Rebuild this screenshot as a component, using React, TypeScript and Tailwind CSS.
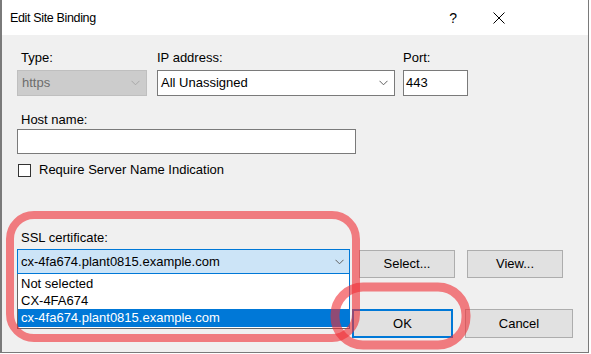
import React from 'react';

const Chevron: React.FC<{ color?: string }> = ({ color = '#606060' }) => (
  <svg width="9" height="6" viewBox="0 0 9 6" className="shrink-0">
    <polyline points="0.5,0.8 4.5,4.8 8.5,0.8" fill="none" stroke={color} strokeWidth="1" />
  </svg>
);

const Label: React.FC<{ children: React.ReactNode; indent?: boolean }> = ({ children, indent }) => (
  <div className={`h-[16px] leading-[16px] ${indent ? 'pl-[4px]' : ''}`}>{children}</div>
);

const Button: React.FC<{ children: React.ReactNode; className?: string; primary?: boolean }> = ({
  children,
  className = '',
  primary,
}) => (
  <div
    className={`flex items-center justify-center bg-[#e1e1e1] ${
      primary ? 'border-2 border-[#0078d7]' : 'border border-[#adadad]'
    } ${className}`}
  >
    {children}
  </div>
);

export default function App() {
  return (
    <div
      className="relative w-[591px] h-[354px] bg-white text-[13px] text-black overflow-hidden"
      style={{ fontFamily: '"Liberation Sans", Arial, sans-serif' }}
    >
      <div className="flex flex-col w-[589px] h-[353px] border-l-2 border-r border-b border-[#7a7a7a]">
        {/* title bar */}
        <div className="h-[35px] shrink-0 bg-white flex items-center pl-[8px] pr-[83px]">
          <span className="text-[12.5px] tracking-[-0.35px] pt-[1px]">Edit Site Binding</span>
          <span className="ml-auto text-[14px] leading-none pt-[1px]">?</span>
          <svg width="12" height="12" viewBox="0 0 12 12" className="ml-[36px]">
            <line x1="0.5" y1="0.5" x2="11.5" y2="11.5" stroke="#000" strokeWidth="1" />
            <line x1="11.5" y1="0.5" x2="0.5" y2="11.5" stroke="#000" strokeWidth="1" />
          </svg>
        </div>

        {/* body */}
        <div className="flex-1 bg-[#f0f0f0] pl-[15px] pt-[15px]">
          <div className="flex items-start">
            <div className="w-[130px]">
              <Label indent>Type:</Label>
              <div className="mt-[4px] h-[26px] bg-[#cccccc] border border-[#bfbfbf] flex items-center pl-[4px] pr-[6px] text-[#6d6d6d]">
                <span>https</span>
                <span className="ml-auto">
                  <Chevron color="#a8a8a8" />
                </span>
              </div>
            </div>
            <div className="w-[238px] ml-[10px]">
              <Label>IP address:</Label>
              <div className="mt-[4px] h-[26px] bg-white border border-[#7a7a7a] flex items-center pl-[3px] pr-[6px]">
                <span>All Unassigned</span>
                <span className="ml-auto">
                  <Chevron />
                </span>
              </div>
            </div>
            <div className="w-[65px] ml-[8px]">
              <Label>Port:</Label>
              <div className="mt-[4px] h-[26px] bg-white border border-[#7a7a7a] flex items-center pl-[2px]">
                443
              </div>
            </div>
          </div>

          <div className="mt-[16px]">
            <Label indent>Host name:</Label>
            <div className="mt-[1px] w-[339px] h-[25px] bg-white border border-[#7a7a7a]" />
          </div>

          <div className="mt-[8px] h-[16px] flex items-center">
            <div className="ml-[1px] w-[13px] h-[13px] bg-white border border-[#333333]" />
            <span className="ml-[8px] leading-[16px]">Require Server Name Indication</span>
          </div>

          <div className="mt-[52px]">
            <Label indent>SSL certificate:</Label>
            <div className="mt-[3px] flex items-start">
              <div className="relative w-[333px]">
                <div className="h-[25px] bg-[#cce4f7] border border-[#0078d7] flex items-center pl-[3px] pr-[5px]">
                  <span>cx-4fa674.plant0815.example.com</span>
                  <span className="ml-auto">
                    <Chevron />
                  </span>
                </div>
                {/* open dropdown list */}
                <div className="absolute left-0 top-[25px] w-[333px] bg-white border border-t-0 border-[#646464] border-r-[#0078d7] pt-[1px] pb-[1px] z-10">
                  <div className="h-[17px] leading-[17px] pl-[3px]">Not selected</div>
                  <div className="h-[17px] leading-[17px] pl-[3px]">CX-4FA674</div>
                  <div className="h-[18px] leading-[18px] pl-[3px] bg-[#0078d7] text-white">
                    cx-4fa674.plant0815.example.com
                  </div>
                </div>
              </div>
              <Button className="ml-[9px] mt-[1px] w-[96px] h-[28px]">Select...</Button>
              <Button className="ml-[12px] mt-[1px] w-[96px] h-[28px]">View...</Button>
            </div>
          </div>

          <div className="mt-[31px] flex ml-[335px]">
            <Button primary className="w-[101px] h-[29px]">
              OK
            </Button>
            <Button className="ml-[12px] w-[108px] h-[29px]">Cancel</Button>
          </div>
        </div>
      </div>

      {/* red highlight annotations */}
      <svg className="absolute inset-0 z-20 pointer-events-none" width="591" height="354" viewBox="0 0 591 354">
        <g fill="none" stroke="rgb(240,45,52)" strokeOpacity="0.6">
          <rect x="10" y="215" width="346" height="123" rx="24" strokeWidth="8" />
          <rect x="335" y="287" width="131" height="58" rx="28" strokeWidth="9" />
        </g>
      </svg>
    </div>
  );
}
